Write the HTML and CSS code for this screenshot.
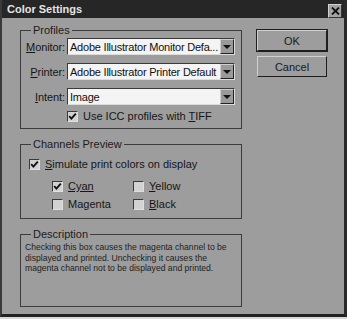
FILE: index.html
```html
<!DOCTYPE html>
<html>
<head>
<meta charset="utf-8">
<link rel="stylesheet" href="styles.css">
</head>
<body>
<div class="dialog">
  <div class="titlebar">
    <span class="title">Color Settings</span>
    <span class="close"><svg width="9" height="8" viewBox="0 0 9 8"><path d="M1 0.5 L8 7.5 M8 0.5 L1 7.5" stroke="#111" stroke-width="1.8"/></svg></span>
  </div>
  <div class="body">
    <div class="groups">
      <fieldset class="group profiles">
        <legend>Profiles</legend>
        <div class="form">
          <span class="lbl"><u>M</u>onitor:</span>
          <div class="select"><span class="val">Adobe Illustrator Monitor Defa...</span><span class="arrow"><i></i></span></div>
          <span class="lbl"><u>P</u>rinter:</span>
          <div class="select"><span class="val">Adobe Illustrator Printer Default</span><span class="arrow"><i></i></span></div>
          <span class="lbl"><u>I</u>ntent:</span>
          <div class="select"><span class="val">Image</span><span class="arrow"><i></i></span></div>
        </div>
        <div class="check icc"><span class="box on"><svg width="9" height="9" viewBox="0 0 9 9"><path d="M1.2 4.2 L3.4 6.6 L7.8 1.6" stroke="#111" stroke-width="1.9" fill="none"/></svg></span><span>Use ICC profiles with <u>T</u>IFF</span></div>
      </fieldset>
      <fieldset class="group channels">
        <legend>Channels Preview</legend>
        <div class="check sim"><span class="box on"><svg width="9" height="9" viewBox="0 0 9 9"><path d="M1.2 4.2 L3.4 6.6 L7.8 1.6" stroke="#111" stroke-width="1.9" fill="none"/></svg></span><span><u>S</u>imulate print colors on display</span></div>
        <div class="colors">
          <div class="check"><span class="box on"><svg width="9" height="9" viewBox="0 0 9 9"><path d="M1.2 4.2 L3.4 6.6 L7.8 1.6" stroke="#111" stroke-width="1.9" fill="none"/></svg></span><span><u>Cyan</u></span></div>
          <div class="check"><span class="box"></span><span><u>Y</u>ellow</span></div>
          <div class="check"><span class="box"></span><span>Magenta</span></div>
          <div class="check"><span class="box"></span><span><u>B</u>lack</span></div>
        </div>
      </fieldset>
      <fieldset class="group desc">
        <legend>Description</legend>
        <p class="desctext">Checking this box causes the magenta channel to be displayed and printed. Unchecking it causes the magenta channel not to be displayed and printed.</p>
      </fieldset>
    </div>
    <div class="buttons">
      <div class="btn default">OK</div>
      <div class="btn">Cancel</div>
    </div>
  </div>
</div>
</body>
</html>
```
FILE: styles.css
```css
html, body {
  margin: 0;
  padding: 0;
  background: #d8d8d8;
}
body {
  font-family: "Liberation Sans", Arial, sans-serif;
  font-size: 11px;
  color: #161616;
}
.dialog {
  width: 347px;
  height: 317px;
  box-sizing: border-box;
  background: #9d9d9d;
  border-left: 2px solid #3a3a3a;
  border-right: 3px solid #2a2a2a;
  border-bottom: 3px solid #222;
  display: flex;
  flex-direction: column;
}
.titlebar {
  height: 18px;
  flex: none;
  background: #262626;
  display: flex;
  align-items: center;
  justify-content: space-between;
  padding: 0 2px 0 5px;
}
.title {
  color: #e4e4e4;
  font-weight: bold;
  font-size: 11px;
  line-height: 18px;
}
.close {
  width: 12px;
  height: 12px;
  margin-top: 4px;
  background: #a2a2a2;
  border: 1px solid;
  border-color: #d0d0d0 #333 #333 #d0d0d0;
  display: flex;
  align-items: center;
  justify-content: center;
}
.body {
  display: flex;
  padding: 6px 0 0 18px;
  gap: 15px;
}
.groups {
  width: 222px;
  display: flex;
  flex-direction: column;
  gap: 9px;
}
.group {
  margin: 0;
  padding: 0;
  width: 222px;
  box-sizing: border-box;
  border: 1px solid #3c3c3c;
  min-inline-size: 0;
}
.group legend {
  margin-left: 10px;
  padding: 0 2px;
  line-height: 12px;
  font-size: 11px;
  color: #1c1c1c;
}
.form {
  display: grid;
  grid-template-columns: 44px 168px;
  column-gap: 2px;
  row-gap: 8px;
  padding-top: 2px;
  align-items: center;
}
.lbl {
  text-align: right;
  letter-spacing: -0.1px;
}
.select {
  height: 17px;
  box-sizing: border-box;
  background: #f4f4f4;
  border: 1px solid;
  border-color: #3a3a3a #dcdcdc #dcdcdc #3a3a3a;
  display: flex;
  align-items: center;
  padding-left: 2px;
}
.val {
  flex: 1;
  white-space: nowrap;
  overflow: hidden;
  letter-spacing: -0.22px;
  color: #111;
}
.arrow {
  width: 14px;
  height: 15px;
  box-sizing: border-box;
  background: #9a9a9a;
  border: 1px solid;
  border-color: #cfcfcf #222 #222 #cfcfcf;
  display: flex;
  align-items: center;
  justify-content: center;
}
.arrow i {
  width: 0;
  height: 0;
  border-left: 4px solid transparent;
  border-right: 4px solid transparent;
  border-top: 4px solid #111;
}
.check {
  display: flex;
  align-items: center;
  gap: 5px;
  height: 12px;
  white-space: nowrap;
}
.box {
  width: 11px;
  height: 11px;
  box-sizing: border-box;
  background: #d2d2d2;
  border: 1px solid;
  border-color: #3a3a3a #e0e0e0 #e0e0e0 #3a3a3a;
  display: flex;
  align-items: center;
  justify-content: center;
  flex: none;
}
.icc {
  margin: 5px 0 6px 46px;
}
.channels .sim {
  margin: 8px 0 0 8px;
}
.colors {
  display: grid;
  grid-template-columns: 81px 81px;
  row-gap: 6px;
  margin: 10px 0 8px 31px;
}
.desc {
  height: 79px;
}
.desctext {
  margin: 0;
  padding: 2px 6px 0 4px;
  font-size: 8.6px;
  line-height: 10.5px;
  color: #1e1e1e;
}
.buttons {
  display: flex;
  flex-direction: column;
  gap: 5px;
  padding-top: 6px;
}
.btn {
  width: 70px;
  height: 21px;
  box-sizing: border-box;
  border: 1px solid;
  border-color: #d0d0d0 #1e1e1e #1e1e1e #d0d0d0;
  display: flex;
  align-items: center;
  justify-content: center;
  color: #1a1a1a;
}
.btn.default {
  outline: 1px solid #1e1e1e;
  outline-offset: 0;
}
```
